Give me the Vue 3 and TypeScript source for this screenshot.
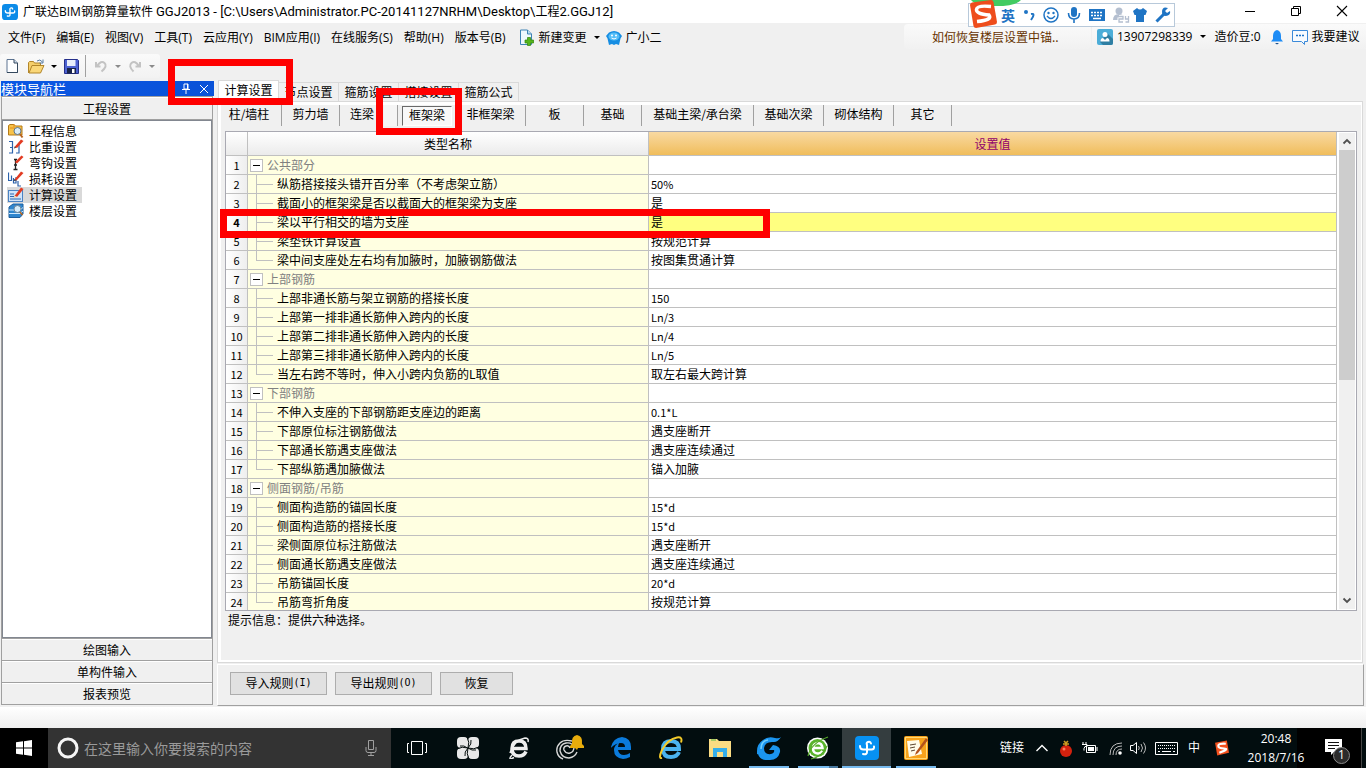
<script setup lang="ts">
import { ref } from 'vue'

interface Row {
  name: string
  value?: string
  group?: boolean
  last?: boolean
}

const menus: string[] = ['文件(F)', '编辑(E)', '视图(V)', '工具(T)', '云应用(Y)', 'BIM应用(I)', '在线服务(S)', '帮助(H)', '版本号(B)']
const modules: { icon: string; label: string }[] = [
  { icon: 'info', label: '工程信息' },
  { icon: 'weight', label: '比重设置' },
  { icon: 'hook', label: '弯钩设置' },
  { icon: 'loss', label: '损耗设置' },
  { icon: 'calc', label: '计算设置' },
  { icon: 'floor', label: '楼层设置' },
]
const activeModule = ref('计算设置')
const tabs: string[] = ['计算设置', '节点设置', '箍筋设置', '搭接设置', '箍筋公式']
const activeTab = ref('计算设置')
const members: { label: string; size: string }[] = [
  { label: '柱/墙柱', size: 'first' },
  { label: '剪力墙', size: 'short' },
  { label: '连梁', size: 'narrow' },
  { label: '框架梁', size: 'short' },
  { label: '非框架梁', size: 'medium' },
  { label: '板', size: 'short' },
  { label: '基础', size: 'short' },
  { label: '基础主梁/承台梁', size: 'long' },
  { label: '基础次梁', size: 'medium' },
  { label: '砌体结构', size: 'medium' },
  { label: '其它', size: 'short' },
]
const activeMember = ref('框架梁')
const selectedRow = ref(4)

const rows: Row[] = [
  { name: '公共部分', group: true },
  { name: '纵筋搭接接头错开百分率（不考虑架立筋）', value: '50%' },
  { name: '截面小的框架梁是否以截面大的框架梁为支座', value: '是' },
  { name: '梁以平行相交的墙为支座', value: '是' },
  { name: '梁垫铁计算设置', value: '按规范计算' },
  { name: '梁中间支座处左右均有加腋时，加腋钢筋做法', value: '按图集贯通计算', last: true },
  { name: '上部钢筋', group: true },
  { name: '上部非通长筋与架立钢筋的搭接长度', value: '150' },
  { name: '上部第一排非通长筋伸入跨内的长度', value: 'Ln/3' },
  { name: '上部第二排非通长筋伸入跨内的长度', value: 'Ln/4' },
  { name: '上部第三排非通长筋伸入跨内的长度', value: 'Ln/5' },
  { name: '当左右跨不等时，伸入小跨内负筋的L取值', value: '取左右最大跨计算', last: true },
  { name: '下部钢筋', group: true },
  { name: '不伸入支座的下部钢筋距支座边的距离', value: '0.1*L' },
  { name: '下部原位标注钢筋做法', value: '遇支座断开' },
  { name: '下部通长筋遇支座做法', value: '遇支座连续通过' },
  { name: '下部纵筋遇加腋做法', value: '锚入加腋', last: true },
  { name: '侧面钢筋/吊筋', group: true },
  { name: '侧面构造筋的锚固长度', value: '15*d' },
  { name: '侧面构造筋的搭接长度', value: '15*d' },
  { name: '梁侧面原位标注筋做法', value: '遇支座断开' },
  { name: '侧面通长筋遇支座做法', value: '遇支座连续通过' },
  { name: '吊筋锚固长度', value: '20*d' },
  { name: '吊筋弯折角度', value: '按规范计算', last: true },
]

const isLatin = (text?: string): boolean => !!text && /^[\x20-\x7e]+$/.test(text)
</script>

<template>
  <div class="desktop">
    <header class="titlebar">
      <svg class="app-icon" width="16" height="16" viewBox="0 0 24 24">
        <rect width="24" height="24" rx="5" fill="#0b8be8" />
        <path d="M16 7.500Q15 5 13 6t-1 3v7q0 3-4 2M5 10q0 3.500 3.500 3.500h8q3 0 2.500-3" fill="none" stroke="#fff" stroke-width="2" stroke-linecap="round" />
      </svg>
      <h1 class="title">广联达BIM钢筋算量软件 <span>GGJ2013 - [C:\Users\Administrator.PC-20141127NRHM\Desktop\</span>工程<span>2.GGJ12]</span></h1>
      <div class="window-buttons">
        <button type="button" aria-label="最小化"><svg width="12" height="12"><path d="M1 6.500h10" stroke="#000" /></svg></button>
        <button type="button" aria-label="还原"><svg width="12" height="12"><path d="M3.500 3.500v-2h7v7h-2M1.500 3.500h7v7h-7z" fill="none" stroke="#000" /></svg></button>
        <button type="button" aria-label="关闭"><svg width="12" height="12"><path d="M1 1l10 10M11 1L1 11" stroke="#000" stroke-width="1.100" /></svg></button>
      </div>
    </header>

    <div class="menubar">
      <nav class="menus">
        <button v-for="m in menus" :key="m" type="button">{{ m }}</button>
      </nav>
      <button type="button" class="new-change">
        <svg width="16" height="17" viewBox="0 0 16 17">
          <path d="M1.500 1h7l4 4v10.500h-11z" fill="#eef7fd" stroke="#3c83b5" />
          <path d="M8.500 1v4h4" fill="#b9dcf1" stroke="#3c83b5" />
          <path d="M8.500 8.500h3v2.500h3v3h-3v2.500h-3v-2.500h-2.500v-3h2.500z" fill="#56b51c" stroke="#2e8508" stroke-width=".7" />
        </svg>
        <span>新建变更</span>
        <i class="caret"></i>
      </button>
      <button type="button" class="helper">
        <svg width="16" height="16" viewBox="0 0 16 16">
          <path d="M3 2.500Q8-.5 13 2.500L16 6l-1.500 2.500L13 15l-3-1-2 1-2-1-3 1-1.500-6.500L0 6z" fill="#168de2" />
          <ellipse cx="8" cy="6.500" rx="5.500" ry="4" fill="#54bdf7" />
          <circle cx="6" cy="5.500" r="1" fill="#fff" /><circle cx="10" cy="5.500" r="1" fill="#fff" />
          <path d="M5.500 8q2.500 2 5 0" fill="none" stroke="#fff" />
        </svg>
        <span>广小二</span>
      </button>
      <div class="account">
        <a href="#" class="tip-link">如何恢复楼层设置中锚..</a>
        <div class="user">
          <button type="button" class="phone">
            <svg width="16" height="16" viewBox="0 0 16 16">
              <rect width="16" height="16" rx="2" fill="#4badd8" />
              <path d="M10 4l6 6v4q0 2-2 2H6l-3-3z" fill="#2f7fa3" />
              <circle cx="8" cy="5.500" r="2.500" fill="#fff" />
              <path d="M3.500 12.500q0-3.500 2.500-3.500l2 2 2-2q2.500 0 2.500 3.500z" fill="#fff" />
            </svg>
            <span>13907298339</span>
            <i class="caret"></i>
          </button>
          <span class="beans">造价豆:0</span>
          <svg class="bell" width="14" height="16" viewBox="0 0 14 16">
            <path d="M7 1Q11 2 11 7v3l2 2.500H1L3 10V7Q3 2 7 1z" fill="#1e8cf5" />
            <path d="M5 14h4l-2 1.500z" fill="#174f8c" />
          </svg>
          <button type="button" class="advice">
            <svg width="17" height="16" viewBox="0 0 17 16">
              <path d="M.5 1.500h15v11h-3v3l-3-3h-9z" fill="#f7fbff" stroke="#3b8ad9" />
              <path d="M4 6.500h9" stroke="#1e74c9" stroke-width="1.500" stroke-dasharray="2 1" />
            </svg>
            <span>我要建议</span>
          </button>
        </div>
      </div>
    </div>

    <div class="toolbar">
      <div class="tools">
        <button type="button" class="tool" aria-label="新建">
          <svg width="13" height="16" viewBox="0 0 13 16"><path d="M1 1.500h7l3.500 3.500v9.500H1z" fill="#fdfeff" stroke="#5c7391" /><path d="M8 1.500V5h3.500" fill="#cddcec" stroke="#34495f" /><path d="M11.500 5v9.500H1" fill="none" stroke="#33475c" /></svg>
        </button>
        <button type="button" class="tool open" aria-label="打开">
          <svg width="17" height="15" viewBox="0 0 17 15"><path d="M.5 14V3.500l1-1h4l1 1.500h6v3" fill="#f5cf6b" stroke="#b1852a" /><path d="M1 14L4 6.500h12L12.500 14z" fill="#fad778" stroke="#b1852a" /><path d="M9 2q3-2.500 5.500 1M15 .5v3.500h-3.500" fill="none" stroke="#567ca5" /></svg>
          <i class="caret"></i>
        </button>
        <button type="button" class="tool save" aria-label="保存">
          <svg width="15" height="15" viewBox="0 0 15 15"><path d="M.5.5h13l1 1v13H.5z" fill="#4d62d2" stroke="#252f8a" /><rect x="3" y="1" width="8.500" height="6" fill="#e9eefb" /><rect x="3" y="9" width="9" height="5.500" fill="#182348" /><rect x="8" y="10" width="2.500" height="4" fill="#fff" /></svg>
        </button>
        <i class="tool-sep"></i>
        <button type="button" class="tool undo" aria-label="撤销">
          <svg width="14" height="14" viewBox="0 0 14 14"><path d="M2 3v4.500h4.500M3 7Q7 1 10.500 4t-3 8.500" fill="none" stroke="#c3c3c3" stroke-width="2" /></svg>
          <i class="caret dim"></i>
        </button>
        <button type="button" class="tool redo" aria-label="重做">
          <svg width="14" height="14" viewBox="0 0 14 14"><path d="M12 3v4.500H7.500M11 7Q7 1 3.500 4t2 8.500" fill="none" stroke="#c3c3c3" stroke-width="2" /></svg>
          <i class="caret dim"></i>
        </button>
      </div>
    </div>

    <main class="workspace">
      <aside class="sidebar">
        <div class="nav-head">
          <span>模块导航栏</span>
          <button type="button" class="pin" aria-label="固定"><svg width="8" height="11"><path d="M2 1h4v5H2zM0 6.500h8M4 7v4M5.500 1v5" fill="none" stroke="#fff" /></svg></button>
          <button type="button" aria-label="关闭导航栏"><svg width="8" height="8"><path d="M0 0l8 8M8 0L0 8" stroke="#fff" /></svg></button>
        </div>
        <div class="nav-body">
          <button type="button" class="section top">工程设置</button>
          <ul class="module-list">
            <li v-for="m in modules" :key="m.label">
              <button type="button" :class="{ active: m.label === activeModule }" @click="activeModule = m.label">
                <svg width="16" height="16" viewBox="0 0 16 16">
                  <template v-if="m.icon === 'info'">
                    <path d="M.5 12V2.500l1.500-1h4L7.500 3H14v9z" fill="#f7c34b" stroke="#b47a18" />
                    <path d="M6 1v3M2 5h5" stroke="#e58c1a" />
                    <circle cx="9.500" cy="8" r="3.500" fill="#d9edfa" stroke="#5f7488" /><path d="M12 11l2.500 3.500" stroke="#b86520" stroke-width="2" />
                  </template>
                  <template v-else-if="m.icon === 'weight'">
                    <path d="M1 2.500h3.500V14H1M8 6.500h3V14H8M2 8.500h2" fill="none" stroke="#2c62ab" stroke-width="1.200" />
                    <path d="M6.500 8L13 .5l2.500 1.500L9 9z" fill="#e23b22" /><path d="M6 9.500l.7-2 1.500 1.300z" fill="#333" />
                  </template>
                  <template v-else-if="m.icon === 'hook'">
                    <path d="M6 4.500h3M7.500 5v9M5.500 14.500h4M6 10h3" stroke="#222" stroke-width="1.300" />
                    <path d="M7 7l6.500-6.500 2 1.500L9 8.500z" fill="#e23b22" />
                  </template>
                  <template v-else-if="m.icon === 'loss'">
                    <path d="M.5 1.500v8h3v-5M5.500 7v5h2.500V6M10 10v5h3" fill="none" stroke="#2c62ab" stroke-width="1.200" />
                    <path d="M6.500 8.500L13 .5l2.500 1.500-7 7.500z" fill="#e23b22" /><path d="M5.500 10l1-2 2 1.500z" fill="#333" />
                  </template>
                  <template v-else-if="m.icon === 'calc'">
                    <rect x=".5" y="3.500" width="14" height="11" fill="#cfe4fa" stroke="#4a83c4" /><path d="M2 12h11M2 7h4M2 9.500h4" stroke="#2f69b0" />
                    <path d="M6.500 9L13 .5l2.500 1.500L9 10z" fill="#e23b22" /><path d="M5.500 11l1-2.500L9 10z" fill="#f3d3a0" />
                  </template>
                  <template v-else>
                    <path d="M1 4l4-3h10v10l-3 3.500H1z" fill="#2f86ce" stroke="#1c5e9d" />
                    <path d="M1 7h11l3-2.500M1 10.500h11l3-2.500" fill="none" stroke="#cfeaff" />
                    <circle cx="9.500" cy="6" r="3.500" fill="#d4ecfb" stroke="#6e8598" /><path d="M12 9l2.500 3" stroke="#b86520" stroke-width="1.500" />
                  </template>
                </svg>
                <span>{{ m.label }}</span>
              </button>
            </li>
          </ul>
          <button type="button" class="section">绘图输入</button>
          <button type="button" class="section">单构件输入</button>
          <button type="button" class="section">报表预览</button>
        </div>
      </aside>

      <section class="content">
        <div class="tabs">
          <button v-for="t in tabs" :key="t" type="button" :class="{ active: t === activeTab }" @click="activeTab = t">{{ t }}</button>
        </div>
        <div class="tab-panel">
          <div class="members">
            <template v-for="m in members" :key="m.label">
              <button type="button" :class="[m.size, { pressed: m.label === activeMember }]" @click="activeMember = m.label"><span>{{ m.label }}</span></button>
              <i v-if="m.size === 'narrow'" class="member-gap"></i>
            </template>
          </div>
          <div class="grid-frame">
            <div class="grid-view">
              <table>
                <colgroup><col class="c-num" /><col class="c-name" /><col /></colgroup>
                <thead>
                  <tr><th></th><th>类型名称</th><th class="hot">设置值</th></tr>
                </thead>
                <tbody>
                  <tr v-for="(r, i) in rows" :key="i" :class="{ selected: selectedRow === i + 1 }" @click="selectedRow = i + 1">
                    <th class="num" scope="row">{{ i + 1 }}</th>
                    <td class="name" :class="{ group: r.group, leaf: !r.group, last: r.last }"><i v-if="r.group" class="toggle"></i><span>{{ r.name }}</span></td>
                    <td class="value" :class="{ latin: isLatin(r.value) }">{{ r.value }}</td>
                  </tr>
                </tbody>
              </table>
            </div>
            <div class="scrollbar">
              <svg width="16" height="17"><path d="M4.500 10.500L8 7l3.500 3.500" fill="none" stroke="#505050" stroke-width="1.800" /></svg>
              <div class="track"><div class="thumb"></div></div>
              <svg width="16" height="17"><path d="M4.500 6.500L8 10l3.500-3.500" fill="none" stroke="#505050" stroke-width="1.800" /></svg>
            </div>
          </div>
          <p class="hint">提示信息：提供六种选择。</p>
        </div>
        <div class="actions">
          <button type="button">导入规则<span>(I)</span></button>
          <button type="button">导出规则<span>(O)</span></button>
          <button type="button" class="restore">恢复</button>
        </div>
      </section>
    </main>
    <div class="status-strip"></div>

    <footer class="taskbar">
      <button type="button" class="start" aria-label="开始">
        <svg width="16" height="16" viewBox="0 0 16 16"><path d="M0 2.300L7 1.300V7.500H0zM8 1.200L16 0v7.500H8zM0 8.500h7v6.200L0 13.700zM8 8.500h8V16l-8-1.200z" fill="#fff" /></svg>
      </button>
      <label class="search">
        <svg width="22" height="22" viewBox="0 0 22 22"><circle cx="11" cy="11" r="9" fill="none" stroke="#f5f5f5" stroke-width="3" /></svg>
        <input type="text" aria-label="搜索" placeholder="在这里输入你要搜索的内容" />
        <svg width="12" height="18" viewBox="0 0 12 18"><path d="M3.500 1.500h5v9h-5zM1 8v3.500q0 2 2 2h6q2 0 2-2V8M6 13.500v3M3 16.500h6" fill="none" stroke="#a0a0a0" /></svg>
      </label>
      <div class="pinned">
        <button type="button" aria-label="任务视图"><svg width="22" height="16"><path d="M5.500 1.500h11v13h-11zM3 3.500H1.500v9H3M19 3.500h1.500v9H19" fill="none" stroke="#fff" /></svg></button>
        <button type="button" aria-label="四叶草"><svg width="22" height="22" viewBox="0 0 22 22"><rect width="11" height="11" rx="4" fill="#e8e8e8" /><rect x="11" width="11" height="11" rx="4" fill="#e8e8e8" /><rect y="11" width="11" height="11" rx="4" fill="#e8e8e8" /><rect x="11" y="11" width="11" height="11" rx="4" fill="#e8e8e8" /><rect x="7" y="7" width="8" height="8" fill="#e8e8e8" /><path d="M11 11Q13 5 10 0M11 11q6 2 11-1M11 11q-2 6 1 11M11 11Q5 9 0 12M10.500 11Q7 8 3 9M11 11q4-4 3-8M11 11q4 3 8 2M11 11q-4 4-3 8" fill="none" stroke="#07100f" stroke-width="1" /></svg></button>
        <button type="button" aria-label="浏览器"><svg width="22" height="22" viewBox="0 0 22 22"><path d="M18 14.500q-2 4.500-7 4.500-7 0-7-7.500T11 4q7 0 7 7.500H5" fill="none" stroke="#eee" stroke-width="3.500" /><path d="M4 18q-5 6 2 2.500M2 16Q6 3 17 1q4 0 3 4" fill="none" stroke="#eee" stroke-width="1.500" /></svg></button>
        <button type="button" aria-label="提醒"><svg width="28" height="26" viewBox="0 0 28 26"><path d="M14 13q-1-3-4-2t-2 4q2 4 6 3t4-6q-2-5-8-4t-6 8q2 7 9 7 6-1 8-6M16 6Q8 4 4 8T1 17q1 5 6 7" fill="none" stroke="#d8d8d8" stroke-width="1.400" /><path d="M21 0q6 1 5 9l2 2v2h-6l-1 2-2-2h-5v-2l2-2Q15 1 21 0z" fill="#e8ac0c" /></svg></button>
        <button type="button" aria-label="Edge"><svg width="20" height="22" viewBox="0 0 20 22"><path d="M0 10Q2 1 11 0q9 1 9 10v3H7q1 5 6 5 3 0 6-2v4q-4 2-7 2-9-1-9-9 0-5 6-8-2 2-2 5h7q0-4-4-4-6 0-11 6z" fill="#0b7bdc" /></svg></button>
      </div>
      <div class="running">
        <button type="button" aria-label="Internet Explorer"><svg width="24" height="24" viewBox="0 0 24 24"><path d="M20 16q-2 5-8 5-8 0-8-8t8-8q8 0 8 8H6" fill="none" stroke="#4bb3ef" stroke-width="4" /><path d="M3 22Q-1 23 3 14 9 3 18 1.500q6-1 4 5" fill="none" stroke="#f3ca29" stroke-width="2" /></svg></button>
        <button type="button" aria-label="文件资源管理器"><svg width="22" height="20" viewBox="0 0 22 20"><path d="M0 1h8l2 2h12v16H0z" fill="#fbdc83" /><path d="M2 2h5" stroke="#54b948" /><path d="M4 19v-9h14v9h-4v-5H8v5z" fill="#35aeea" /></svg></button>
        <button type="button" class="run" aria-label="G浏览器"><svg width="24" height="24" viewBox="0 0 24 24"><path d="M24 1q-3 5-7 5-9-1-10 6 0 7 7 6 4-1 3-4h-5l4-5q8 1 7 7-2 8-10 8-10 1-12-6-3 1-1-3Q0 8 6 4q5-4 12-2 4 1 6-1z" fill="#1b95ef" /><path d="M4 13Q4 5 11 4" fill="none" stroke="#6fd0ff" stroke-width="1.500" /></svg></button>
        <button type="button" class="run many" aria-label="360浏览器"><svg width="23" height="24" viewBox="0 0 23 24"><circle cx="11.500" cy="12" r="10.500" fill="#fff" /><circle cx="11.500" cy="12" r="9" fill="#5ab42d" /><path d="M16.500 15q-2 3-5 2.500-4.500-.5-4.500-5T11.500 7q4.500 0 5 5H7" fill="none" stroke="#fff" stroke-width="2.500" /><path d="M2 20Q5 7 22 1M5 23Q16 21 21 10" fill="none" stroke="#55aa28" stroke-width="1.200" /></svg></button>
        <button type="button" class="run current" aria-label="广联达"><svg width="24" height="24" viewBox="0 0 24 24"><rect width="24" height="24" rx="4" fill="#0791f2" /><path d="M16 7.500Q15 5 13 6t-1 3v7q0 3-4 2M5 10q0 3.500 3.500 3.500h8q3 0 2.500-3" fill="none" stroke="#fff" stroke-width="2" stroke-linecap="round" /></svg></button>
        <button type="button" class="run" aria-label="画图"><svg width="24" height="24" viewBox="0 0 24 24"><rect width="24" height="24" rx="2" fill="#f7a21b" /><rect x="1.500" y="1.500" width="21" height="21" fill="none" stroke="#ffd873" /><path d="M3 5l12-1 3 14-13 3z" fill="#fffbe9" /><path d="M6 9l6-1M6 12l5-1M7 15l4-1" stroke="#5d4630" /><path d="M22 2L12 16l-1 3 3-2L24 4z" fill="#b5521a" /></svg></button>
      </div>
      <div class="tray">
        <span class="links">链接</span>
        <svg class="i-up" width="12" height="8"><path d="M.5 7L6 1.500 11.500 7" fill="none" stroke="#fff" stroke-width="1.400" /></svg>
        <svg class="i-red" width="14" height="17" viewBox="0 0 14 17"><circle cx="7" cy="11" r="6" fill="#d4210e" /><path d="M4 4h6M5 1l2 2 2-2M7 2v4" stroke="#cf9b22" stroke-width="1.600" fill="none" /><circle cx="5" cy="9" r="1.500" fill="#ff7c59" /></svg>
        <svg class="i-bat" width="16" height="12"><path d="M4.500 3.500h9v7h-9zM15 5v4M1 0v2M4 0v2M0 2.500h5v2H3l-1 2v2" fill="none" stroke="#fff" /><rect x="6" y="5" width="6" height="4" fill="#fff" /></svg>
        <svg class="i-net" width="13" height="13"><path d="M1 13Q1 1 13 1M4 13Q4 4 13 4M7 13Q7 7 13 7" fill="none" stroke="#bbb" /><circle cx="11" cy="11" r="1.800" fill="#fff" /></svg>
        <svg class="i-vol" width="17" height="14"><path d="M.5 4.500H3l3.500-3v11L3 9.500H.5z" fill="none" stroke="#fff" /><path d="M8.500 5q1.500 2 0 4M11 3q3 4 0 8M13.500 1.500q4 5.500 0 11" fill="none" stroke="#bbb" /></svg>
        <svg class="i-kbd" width="23" height="13"><path d="M.5.5h22v12H.5z" fill="none" stroke="#fff" /><path d="M3 3.500h17M3 6.500h17" stroke="#fff" stroke-dasharray="1 1" /><path d="M3 9.500h2M7 9.500h9M18 9.500h2" stroke="#fff" /></svg>
        <span class="lang">中</span>
        <svg class="i-sogou" width="15" height="16" viewBox="0 0 28 28"><path d="M2 4l22-4 4 23-22 5z" fill="#f4511e" /><path d="M22 6Q8 5 8 10t11 5-9 8" fill="none" stroke="#fff" stroke-width="4" /></svg>
        <div class="clock"><time>20:48</time><time>2018/7/16</time></div>
        <div class="notify">
          <svg width="26" height="28" viewBox="0 0 26 28"><path d="M0 1h17v13H9l-3 3v-3H0z" fill="#fff" /><path d="M3 4.500h11M3 7.500h11M3 10.500h7" stroke="#111" /><circle cx="16.500" cy="17.500" r="8" fill="#2b2b2b" stroke="#8b8b8b" /></svg>
          <span class="count">1</span>
        </div>
      </div>
    </footer>

    <div class="ime">
      <svg class="green-dot" width="50" height="6"><path d="M0 0h50q-5 6-25 6T0 0z" fill="#42cb62" /></svg>
      <svg class="ime-logo" width="28" height="28" viewBox="0 0 28 28"><path d="M1 5q0-2 2-2.500L22 0q2 0 2.500 2L28 22q0 2-2 2.500L7 28q-2 0-2.500-2z" fill="#ee4d1c" /><path d="M22 6.500Q8 5 7.500 9.500T20 15q4 5-12 6.500" fill="none" stroke="#fff" stroke-width="3.500" /></svg>
      <span>英</span>
      <svg width="12" height="14"><circle cx="3" cy="4" r="2" fill="#1f74c4" /><path d="M8 6q5-1 0 6" fill="none" stroke="#1f74c4" stroke-width="2" /></svg>
      <svg width="16" height="16"><circle cx="8" cy="8" r="7" fill="none" stroke="#1f74c4" stroke-width="1.500" /><circle cx="5.500" cy="6" r="1.200" fill="#1f74c4" /><circle cx="10.500" cy="6" r="1.200" fill="#1f74c4" /><path d="M4 9q4 5 8 0" fill="none" stroke="#1f74c4" stroke-width="1.300" /></svg>
      <svg width="14" height="16"><rect x="4" y="0" width="6" height="10" rx="3" fill="#1f74c4" /><path d="M1.500 6q0 6 5.500 6t5.500-6M7 12v4" fill="none" stroke="#1f74c4" stroke-width="1.600" /></svg>
      <svg width="16" height="12"><rect width="16" height="12" fill="#1f74c4" /><path d="M2 3.500h12M2 6.500h12" stroke="#fff" stroke-width="1.500" stroke-dasharray="2 1" /><path d="M4 9.500h8" stroke="#fff" stroke-width="1.500" /></svg>
      <svg class="person" width="17" height="16"><circle cx="6" cy="4" r="3.500" fill="#b4bfd0" /><path d="M0 13q0-6 6-6t5 6z" fill="#b4bfd0" /><path d="M6 9.500h4v2.500H6v3h4M12 9v3h4M15.500 9v6h-3" fill="none" stroke="#fff" stroke-width="3" /><path d="M6 9.500h4v2.500H6v3h4M12.500 9v3h3M15.500 9v6h-3" fill="none" stroke="#b4bfd0" stroke-width="1.300" /></svg>
      <svg width="14" height="14"><path d="M0 3l4-3q3 3 6 0l4 3-1.500 4H11v7H3V7H1.500z" fill="#1f74c4" /></svg>
      <svg width="16" height="16"><path d="M1.500 14.500L9 7" stroke="#1f74c4" stroke-width="3" /><path d="M13 1q-6-2-6 4 0 4 4 4 5-1 4-5l-3 2-2-2z" fill="#1f74c4" /></svg>
    </div>

    <div class="mark mark-tab"></div>
    <div class="mark mark-member"></div>
    <div class="mark mark-row"></div>
  </div>
</template>

<style>
html, body { margin: 0; background: #f0f0f0; }
</style>

<style scoped>
.desktop {
  position: relative;
  display: flex;
  flex-direction: column;
  height: 100vh;
  overflow: hidden;
  background: #f0f0f0;
  color: #000;
  font: 12px/16px "Noto Sans CJK SC", sans-serif;
  white-space: nowrap;
}
.desktop *, .desktop *::before, .desktop *::after { box-sizing: border-box; }
button { margin: 0; padding: 0; border: 0; background: none; color: inherit; font: inherit; display: flex; align-items: center; justify-content: center; }
svg { display: block; flex: none; }
.caret { border: 3px solid transparent; border-top-color: #000; border-bottom: 0; }
.caret.dim { border-top-color: #8a8a8a; }

.titlebar { display: flex; align-items: center; flex: none; height: 23px; padding-left: 2px; background: #fff; }
.title { flex: 1; margin: 0 0 0 5px; font: 12px/20px "Open Sans", "Noto Sans CJK SC", sans-serif; }
.title span { font: 13px/20px Roboto, sans-serif; }
.window-buttons { display: flex; margin-right: 1px; }
.window-buttons button { width: 46px; height: 22px; padding-bottom: 2px; }

.menubar { display: flex; flex: none; height: 29px; font-family: "Open Sans", "Noto Sans CJK SC", sans-serif; }
.menus { display: flex; gap: 11px; padding-left: 8px; }
.new-change, .helper { gap: 4px; margin-left: 13px; }
.new-change .caret { margin-left: 3px; }
.helper { margin-left: 6px; }
.account { display: flex; margin-left: auto; height: 25px; margin-top: 1px; }
.tip-link { width: 187px; padding-left: 28px; border-radius: 4px; background: linear-gradient(#fafafa, #f1f1f1); color: #663300; line-height: 26px; text-decoration: none; font-family: "Noto Sans CJK SC", sans-serif; }
.user { display: flex; align-items: center; width: 274px; margin-left: 1px; padding-left: 5px; background: linear-gradient(#fafafa, #f1f1f1); }
.phone { gap: 4px; }
.phone .caret { margin-left: 4px; }
.beans { margin-left: 8px; }
.bell { margin-left: 9px; }
.advice { margin-left: 8px; gap: 3px; }

.toolbar { flex: none; height: 28px; padding-top: 2px; }
.tools { display: flex; align-items: center; width: 160px; height: 24px; padding-left: 6px; border-radius: 3px; background: linear-gradient(#fafafa, #f2f2f2); }
.tool.open { gap: 6px; margin-left: 9px; }
.tool.save { margin-left: 7px; }
.tool-sep { width: 1px; height: 22px; margin-left: 6px; background: #a0a0a0; }
.tool.undo { margin-left: 8px; gap: 7px; }
.tool.redo { margin-left: 7px; gap: 7px; }

.workspace { display: flex; flex: 1; min-height: 0; }
.sidebar { display: flex; flex-direction: column; flex: none; width: 214px; padding: 1px 0 2px 1px; }
.nav-head { display: flex; align-items: center; flex: none; height: 15px; padding-right: 6px; background: linear-gradient(90deg, #0a57e4, #0a52d8); color: #fff; font-size: 13px; }
.nav-head span { flex: 1; line-height: 14px; }
.pin { margin-right: 10px; }
.nav-body { display: flex; flex-direction: column; flex: 1; min-height: 0; margin-right: 1px; border: 1px solid #a0a0a0; border-top: 0; }
.section { flex: none; height: 22px; border-top: 1px solid #a0a0a0; box-shadow: inset 0 1px #fff; line-height: 20px; }
.section.top { height: 24px; padding-top: 2px; border-bottom: 1px solid #a0a0a0; }
.module-list { flex: 1; margin: 0; padding: 2px 4px; border: 1px solid #828790; background: #fff; list-style: none; overflow: hidden; }
.module-list button { height: 16px; padding: 0 5px 0 1px; gap: 5px; line-height: 16px; }
.module-list .active { background: #d9d9d9; }

.content { display: flex; flex-direction: column; flex: 1; min-width: 0; margin-left: 3px; }
.tabs { display: flex; align-items: flex-end; flex: none; height: 21px; padding-left: 1px; }
.tabs button { width: 60px; height: 19px; border: 1px solid #d9d9d9; border-left: 0; border-bottom: 0; line-height: 18px; }
.tabs .active { width: 61px; height: 21px; padding-bottom: 2px; border-left: 1px solid #d9d9d9; background: #fff; }
.tab-panel { display: flex; flex-direction: column; flex: 1; min-height: 0; margin-right: 3px; border: 1px solid #d9d9d9; padding: 0 5px; box-shadow: inset 3px 0 #fff, inset 0 3px #fff, inset -1px 0 #fff, inset 0 -2px #fff; }
.members { display: flex; flex: none; height: 29px; padding-top: 3px; margin-left: -2px; }
.members button { height: 21px; padding-bottom: 3px; border-right: 1px solid #a0a0a0; }
.members .first { width: 61px; padding-right: 4px; }
.members .short { width: 58px; }
.members .narrow { width: 44px; border-right: 0; }
.members .medium { width: 70px; }
.members .long { width: 112px; }
.member-gap { width: 14px; height: 21px; border-right: 1px solid #a0a0a0; background: #f5f5f5; }
.members .pressed { padding-bottom: 0; border-right: 0; }
.pressed span { width: 50px; height: 20px; border: 1px solid #fff; border-top-color: #696969; border-left-color: #696969; background: #f8f8f8; line-height: 16px; }

.grid-frame { display: flex; flex: 1; min-height: 0; margin-left: 2px; border: 1px solid #a9a9b2; background: #fff; }
.grid-view { flex: 1; min-width: 0; overflow: hidden; }
table { width: 100%; border-collapse: separate; border-spacing: 0; table-layout: fixed; }
.c-num { width: 22px; }
.c-name { width: 401px; }
th, td { height: 19px; padding: 0; border-right: 1px solid #c0c0c0; border-bottom: 1px solid #c0c0c0; font-weight: 400; line-height: 18px; text-align: left; }
thead th { height: 24px; background: linear-gradient(#fff, #ebebeb); line-height: 22px; text-align: center; }
thead .hot { background: linear-gradient(#f9d9a2, #f0bd5b); color: #90006c; }
.num { background: linear-gradient(90deg, #fff, #eee); text-align: center; font-size: 11px; }
.selected .num { font-weight: 700; }
.name { position: relative; background: #ffffe1; }
.name.group { padding-left: 19px; color: #808080; }
.name.leaf { padding-left: 29px; }
.name.leaf::before { content: ""; position: absolute; left: 8px; top: 0; width: 1px; height: 19px; background: #c0c0c0; }
.name.last::before { height: 10px; }
.name.leaf::after { content: ""; position: absolute; left: 9px; top: 9px; width: 16px; height: 1px; background: #c0c0c0; }
.toggle { position: absolute; left: 2px; top: 3px; width: 13px; height: 13px; border: 1px solid #c0c0c0; background: #fff; }
.toggle::before { content: ""; position: absolute; left: 2px; top: 5px; width: 7px; height: 1px; background: #000; }
.value { padding-left: 2px; background: #fff; }
.selected .value { background: #ffff80; }
.value.latin { font-size: 11px; }
.scrollbar { display: flex; flex-direction: column; flex: none; width: 16px; margin: 1px 1px 1px 2px; background: #f0f0f0; }
.track { flex: 1; }
.thumb { height: 52%; background: #cdcdcd; }
.hint { flex: none; height: 51px; margin: 0 0 0 5px; line-height: 18px; }
.actions { display: flex; gap: 8px; flex: none; height: 42px; margin: 1px 2px 1px 0; padding: 7px 0 0 12px; border-left: 1px solid #fff; border-top: 1px solid #fff; border-bottom: 1px solid #a0a0a0; border-right: 1px solid #a0a0a0; }
.actions button { width: 97px; height: 23px; padding-bottom: 2px; border: 1px solid #adadad; background: #e1e1e1; }
.actions span { font: 10px/16px "DejaVu Sans Mono", monospace; }
.actions .restore { width: 73px; }
.status-strip { flex: none; height: 21px; background: linear-gradient(#fff, #efefef); }

.taskbar { display: flex; flex: none; height: 40px; background: #020d0f; color: #fff; font-family: "Open Sans", "Noto Sans CJK SC", sans-serif; }
.start { width: 48px; background: #000; }
.search { display: flex; align-items: center; width: 343px; padding: 0 14px 0 9px; background: #333; }
.search input { flex: 1; min-width: 0; margin-left: 5px; padding: 0; border: 0; outline: 0; background: none; color: #fff; font: 14px/20px "Noto Sans CJK SC", sans-serif; }
.search input::placeholder { color: #9a9a9a; opacity: 1; }
.pinned, .running { display: flex; }
.pinned button { width: 51px; }
.running button { position: relative; width: 49px; }
.run::after { content: ""; position: absolute; left: 5px; right: 4px; bottom: 0; height: 2px; background: #76b9ed; }
.many::after { background: linear-gradient(90deg, #76b9ed 31px, #47779e 31px); }
.running .current { background: #343d3f; }
.current::after { left: 0; right: 0; }
.tray { display: flex; align-items: center; margin-left: auto; }
.i-up { margin-left: 12px; }
.i-red { margin-left: 11px; }
.i-bat { margin-left: 9px; }
.i-net { margin-left: 11px; }
.i-vol { margin-left: 8px; }
.i-kbd { margin-left: 8px; }
.lang { margin-left: 10px; }
.i-sogou { margin-left: 14px; }
.clock { display: flex; flex-direction: column; align-items: center; align-self: stretch; justify-content: center; width: 68px; margin-left: 13px; background: linear-gradient(90deg, transparent 55px, #000 55px); line-height: 19px; }
.notify { position: relative; align-self: stretch; width: 52px; padding: 10px 0 0 15px; border-right: 1px solid #454545; margin-right: 4px; background: #000; }
.count { position: absolute; left: 28px; top: 19px; line-height: 16px; }

.ime { position: absolute; top: 3px; right: 191px; display: flex; align-items: center; gap: 8px; width: 207px; height: 24px; padding: 0 0 0 32px; border: 1px solid #b8c9da; background: #fff; }
.ime span { color: #1f74c4; font-size: 14px; font-weight: 700; line-height: 20px; }
.person { margin-right: -5px; }
.ime-logo { position: absolute; left: 0; top: -4px; }
.green-dot { position: absolute; left: 2px; top: -4px; }

.mark { position: absolute; border: 7px solid #f00; pointer-events: none; }
.mark-tab { left: 168px; top: 59px; width: 125px; height: 46px; }
.mark-member { left: 376px; top: 88px; width: 86px; height: 47px; }
.mark-row { left: 220px; top: 209px; width: 550px; height: 29px; }
</style>
